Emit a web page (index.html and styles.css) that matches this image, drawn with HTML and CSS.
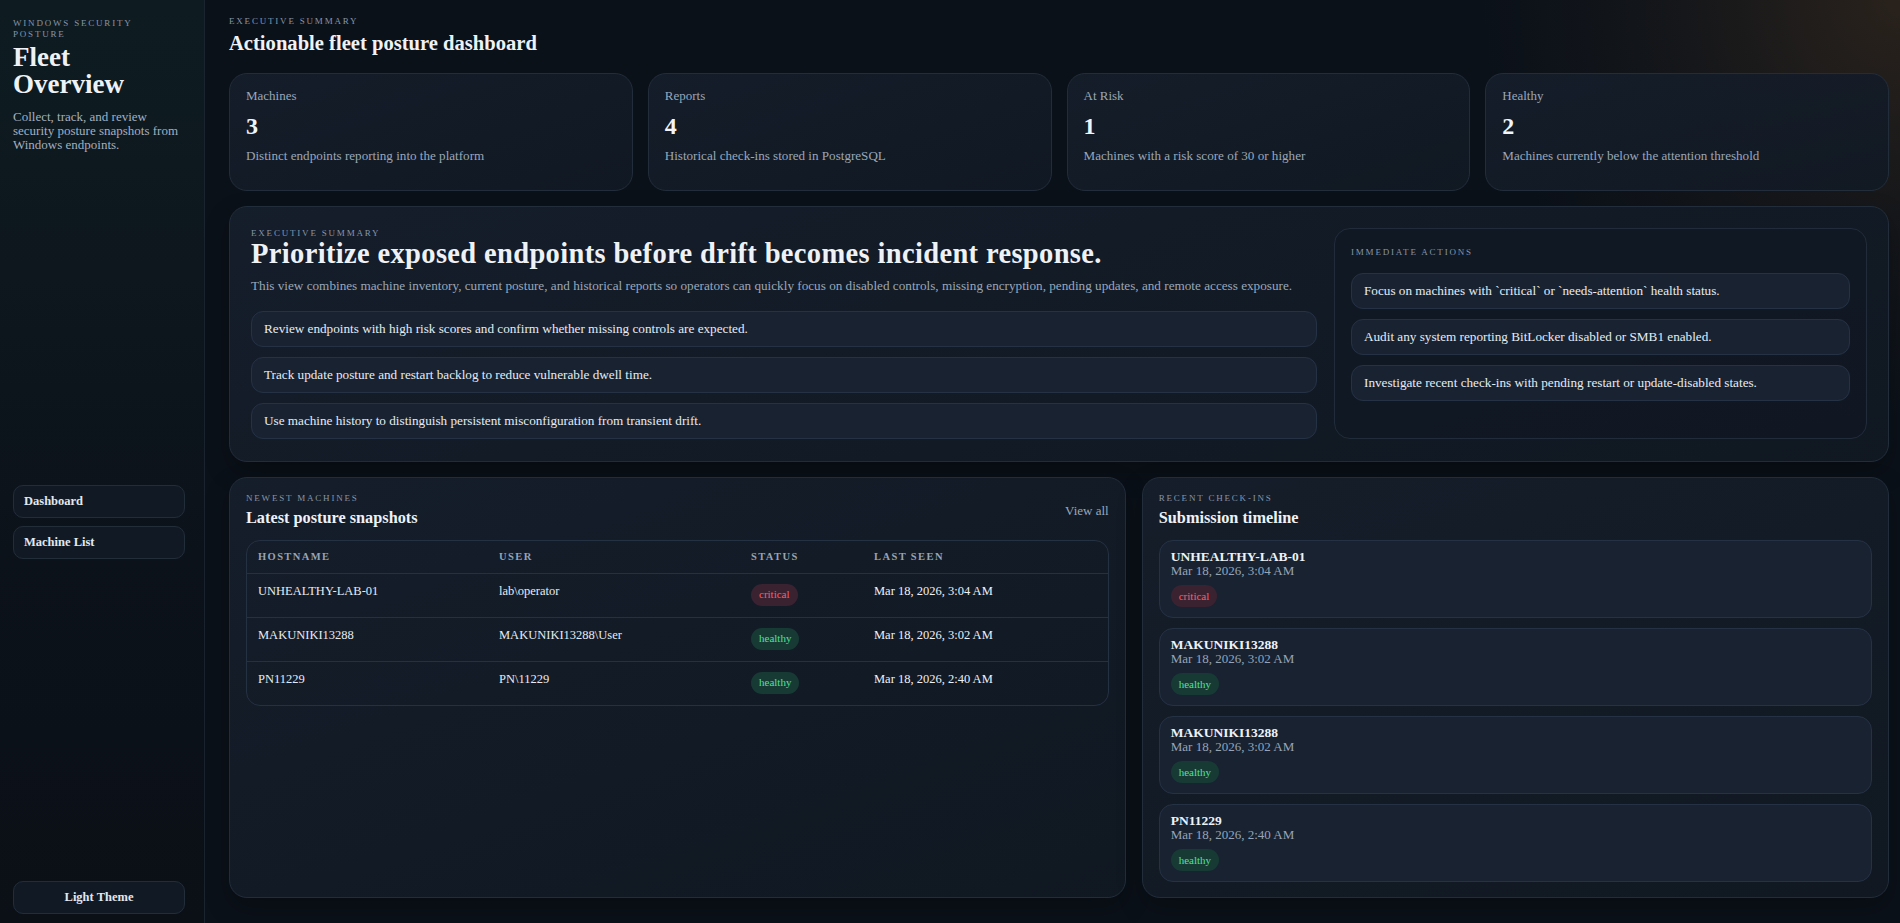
FILE: index.html
```html
<!DOCTYPE html>
<html lang="en">
<head>
<meta charset="utf-8">
<title>Fleet Overview</title>
<link rel="stylesheet" href="styles.css">
</head>
<body>
<div class="app">
  <aside class="sidebar">
    <div class="brand">
      <div class="eyebrow brand-eyebrow">Windows Security Posture</div>
      <h1 class="brand-title">Fleet Overview</h1>
      <p class="brand-desc">Collect, track, and review security posture snapshots from Windows endpoints.</p>
    </div>
    <nav class="nav">
      <a class="nav-btn">Dashboard</a>
      <a class="nav-btn">Machine List</a>
    </nav>
    <button class="theme-btn">Light Theme</button>
  </aside>

  <main class="main">
    <header class="page-head">
      <div class="eyebrow">Executive Summary</div>
      <h2 class="page-title">Actionable fleet posture dashboard</h2>
    </header>

    <section class="stats">
      <div class="stat-card">
        <div class="stat-label">Machines</div>
        <div class="stat-value">3</div>
        <div class="stat-desc">Distinct endpoints reporting into the platform</div>
      </div>
      <div class="stat-card">
        <div class="stat-label">Reports</div>
        <div class="stat-value">4</div>
        <div class="stat-desc">Historical check-ins stored in PostgreSQL</div>
      </div>
      <div class="stat-card">
        <div class="stat-label">At Risk</div>
        <div class="stat-value">1</div>
        <div class="stat-desc">Machines with a risk score of 30 or higher</div>
      </div>
      <div class="stat-card">
        <div class="stat-label">Healthy</div>
        <div class="stat-value">2</div>
        <div class="stat-desc">Machines currently below the attention threshold</div>
      </div>
    </section>

    <section class="panel summary">
      <div class="summary-main">
        <div class="eyebrow">Executive Summary</div>
        <h3 class="headline">Prioritize exposed endpoints before drift becomes incident response.</h3>
        <p class="summary-text">This view combines machine inventory, current posture, and historical reports so operators can quickly focus on disabled controls, missing encryption, pending updates, and remote access exposure.</p>
        <ul class="item-list">
          <li class="item">Review endpoints with high risk scores and confirm whether missing controls are expected.</li>
          <li class="item">Track update posture and restart backlog to reduce vulnerable dwell time.</li>
          <li class="item">Use machine history to distinguish persistent misconfiguration from transient drift.</li>
        </ul>
      </div>
      <div class="actions">
        <div class="eyebrow actions-label">Immediate Actions</div>
        <ul class="item-list">
          <li class="item">Focus on machines with `critical` or `needs-attention` health status.</li>
          <li class="item">Audit any system reporting BitLocker disabled or SMB1 enabled.</li>
          <li class="item">Investigate recent check-ins with pending restart or update-disabled states.</li>
        </ul>
      </div>
    </section>

    <section class="bottom">
      <div class="panel machines">
        <div class="panel-head">
          <div>
            <div class="eyebrow">Newest Machines</div>
            <h4 class="panel-title">Latest posture snapshots</h4>
          </div>
          <a class="view-all">View all</a>
        </div>
        <div class="table-wrap">
          <table class="table">
            <thead>
              <tr><th class="c1">Hostname</th><th class="c2">User</th><th class="c3">Status</th><th>Last Seen</th></tr>
            </thead>
            <tbody>
              <tr><td>UNHEALTHY-LAB-01</td><td>lab\operator</td><td><span class="badge critical">critical</span></td><td class="seen">Mar 18, 2026, 3:04 AM</td></tr>
              <tr><td>MAKUNIKI13288</td><td>MAKUNIKI13288\User</td><td><span class="badge healthy">healthy</span></td><td class="seen">Mar 18, 2026, 3:02 AM</td></tr>
              <tr><td>PN11229</td><td>PN\11229</td><td><span class="badge healthy">healthy</span></td><td class="seen">Mar 18, 2026, 2:40 AM</td></tr>
            </tbody>
          </table>
        </div>
      </div>

      <div class="panel timeline">
        <div class="panel-head">
          <div>
            <div class="eyebrow">Recent Check-ins</div>
            <h4 class="panel-title">Submission timeline</h4>
          </div>
        </div>
        <div class="tl-list">
          <div class="tl-item">
            <div class="tl-host">UNHEALTHY-LAB-01</div>
            <div class="tl-date">Mar 18, 2026, 3:04 AM</div>
            <span class="badge critical">critical</span>
          </div>
          <div class="tl-item">
            <div class="tl-host">MAKUNIKI13288</div>
            <div class="tl-date">Mar 18, 2026, 3:02 AM</div>
            <span class="badge healthy">healthy</span>
          </div>
          <div class="tl-item">
            <div class="tl-host">MAKUNIKI13288</div>
            <div class="tl-date">Mar 18, 2026, 3:02 AM</div>
            <span class="badge healthy">healthy</span>
          </div>
          <div class="tl-item">
            <div class="tl-host">PN11229</div>
            <div class="tl-date">Mar 18, 2026, 2:40 AM</div>
            <span class="badge healthy">healthy</span>
          </div>
        </div>
      </div>
    </section>
  </main>
</div>
</body>
</html>
```

FILE: styles.css
```css
* { box-sizing: border-box; }

html, body { height: 100%; }

body {
  margin: 0;
  font-family: "Liberation Serif", Georgia, serif;
  color: #e6ecf3;
  background:
    radial-gradient(circle at 100% 0%, rgba(120, 78, 36, 0.28) 0, rgba(120, 78, 36, 0.08) 240px, transparent 420px),
    #0b1119;
}

h1, h2, h3, h4, p, ul { margin: 0; padding: 0; }
ul { list-style: none; }

.app {
  display: grid;
  grid-template-columns: 205px 1fr;
  height: 923px;
}

.eyebrow {
  font-size: 9px;
  line-height: 11px;
  letter-spacing: 1.8px;
  text-transform: uppercase;
  color: #8795a8;
}

/* Sidebar */
.sidebar {
  display: flex;
  flex-direction: column;
  justify-content: space-between;
  padding: 18px 19px 9px 13px;
  border-right: 1px solid #1a242e;
  background: linear-gradient(180deg, #0e1c22 0%, #0d171d 30%, #0c121a 60%, #0b1017 100%);
}

.brand-eyebrow { line-height: 10.5px; }

.brand-title {
  margin-top: 5px;
  font-size: 27px;
  line-height: 27px;
  font-weight: 700;
  color: #eef2f7;
}

.brand-desc {
  margin-top: 12px;
  font-size: 13px;
  line-height: 14px;
  color: #a3afc0;
}

.nav {
  display: flex;
  flex-direction: column;
  gap: 8px;
  padding-top: 11px;
}

.nav-btn, .theme-btn {
  display: flex;
  align-items: center;
  height: 33px;
  padding: 0 10px;
  border: 1px solid #222d3a;
  border-radius: 10px;
  background: #111a24;
  color: #e2e8f0;
  font-family: inherit;
  font-size: 12.5px;
  font-weight: 700;
}

.theme-btn {
  justify-content: center;
  width: 100%;
}

/* Main */
.main {
  padding: 16px 11px 0 24px;
  min-width: 0;
}

.page-title {
  margin-top: 4px;
  font-size: 20.6px;
  line-height: 24px;
  font-weight: 700;
  color: #eef2f7;
}

.stats {
  margin-top: 18px;
  display: grid;
  grid-template-columns: repeat(4, 1fr);
  gap: 15px;
}

.stat-card {
  height: 118px;
  padding: 14px 16px;
  border: 1px solid #222d3b;
  border-radius: 18px;
  background: linear-gradient(160deg, rgba(21, 30, 43, 0.9), rgba(17, 25, 36, 0.9));
}

.stat-label {
  font-size: 13px;
  line-height: 16px;
  color: #9aa7b9;
}

.stat-value {
  margin-top: 8px;
  font-size: 24px;
  line-height: 28px;
  font-weight: 700;
  color: #f1f5f9;
}

.stat-desc {
  margin-top: 8px;
  font-size: 13.1px;
  line-height: 16px;
  color: #9aa7b9;
}

.panel {
  border: 1px solid #222d3b;
  border-radius: 18px;
  background: linear-gradient(160deg, rgba(21, 30, 43, 0.95), rgba(16, 24, 34, 0.95));
  box-shadow: 0 10px 24px rgba(0, 0, 0, 0.25);
}

.summary {
  margin-top: 15px;
  padding: 21px 21px 22px 21px;
  display: grid;
  grid-template-columns: 2fr 1fr;
  gap: 17px;
}

.headline {
  font-size: 28.5px;
  line-height: 30px;
  letter-spacing: 0.35px;
  font-weight: 700;
  color: #eef2f7;
}

.summary-text {
  margin-top: 9px;
  font-size: 13.2px;
  line-height: 16px;
  color: #9aa7b9;
}

.item-list {
  display: flex;
  flex-direction: column;
  gap: 10px;
}

.summary-main .item-list { margin-top: 17px; }

.item {
  display: flex;
  align-items: center;
  height: 36px;
  padding: 0 12px;
  border: 1px solid #253245;
  border-radius: 12px;
  background: #182231;
  font-size: 13.2px;
  color: #e6ecf3;
}

.actions {
  padding: 18px 16px;
  border: 1px solid #212c3a;
  border-radius: 16px;
  background: rgba(16, 24, 35, 0.8);
}

.actions-label { margin-bottom: 15px; }

.bottom {
  margin-top: 15px;
  display: grid;
  grid-template-columns: 1.2fr 1fr;
  gap: 16px;
  height: 421px;
}

.machines, .timeline { padding: 15px 16px; }

.panel-head {
  display: flex;
  justify-content: space-between;
  align-items: center;
}

.panel-title {
  margin-top: 4px;
  font-size: 16.3px;
  line-height: 20px;
  font-weight: 700;
  color: #eef2f7;
}

.view-all {
  font-size: 13px;
  color: #9aa7b9;
}

.table-wrap {
  margin-top: 12px;
  border: 1px solid #243142;
  border-radius: 14px;
  overflow: hidden;
}

.table {
  width: 100%;
  border-collapse: collapse;
  table-layout: fixed;
}

.table th {
  height: 32px;
  padding: 0 11px;
  text-align: left;
  font-size: 10.5px;
  letter-spacing: 1.4px;
  text-transform: uppercase;
  font-weight: 700;
  color: #97a4b6;
}

.c1 { width: 241px; }
.c2 { width: 252px; }
.c3 { width: 123px; }

.table td {
  padding: 10px 11px 11px;
  vertical-align: top;
  border-top: 1px solid #243142;
  font-size: 12.5px;
  line-height: 14px;
  color: #e6ecf3;
}

.table td.seen { color: #eef2f7; }

.badge {
  display: inline-flex;
  align-items: center;
  height: 22px;
  padding: 0 8px;
  border-radius: 11px;
  font-size: 11px;
  line-height: 1;
}

.table .badge { vertical-align: top; }

.badge.critical { background: #3a2231; color: #f2616f; }
.badge.healthy { background: #173a35; color: #52e09a; }

.tl-list {
  margin-top: 12px;
  display: flex;
  flex-direction: column;
  gap: 10px;
}

.tl-item {
  display: flex;
  flex-direction: column;
  align-items: flex-start;
  height: 78px;
  padding: 9px 11px 0;
  border: 1px solid #253245;
  border-radius: 14px;
  background: #182231;
}

.tl-host {
  font-size: 13.5px;
  line-height: 14px;
  font-weight: 700;
  color: #eef2f7;
}

.tl-date {
  font-size: 13px;
  line-height: 14px;
  color: #97a4b6;
}

.tl-item .badge { margin-top: 7px; }
```
